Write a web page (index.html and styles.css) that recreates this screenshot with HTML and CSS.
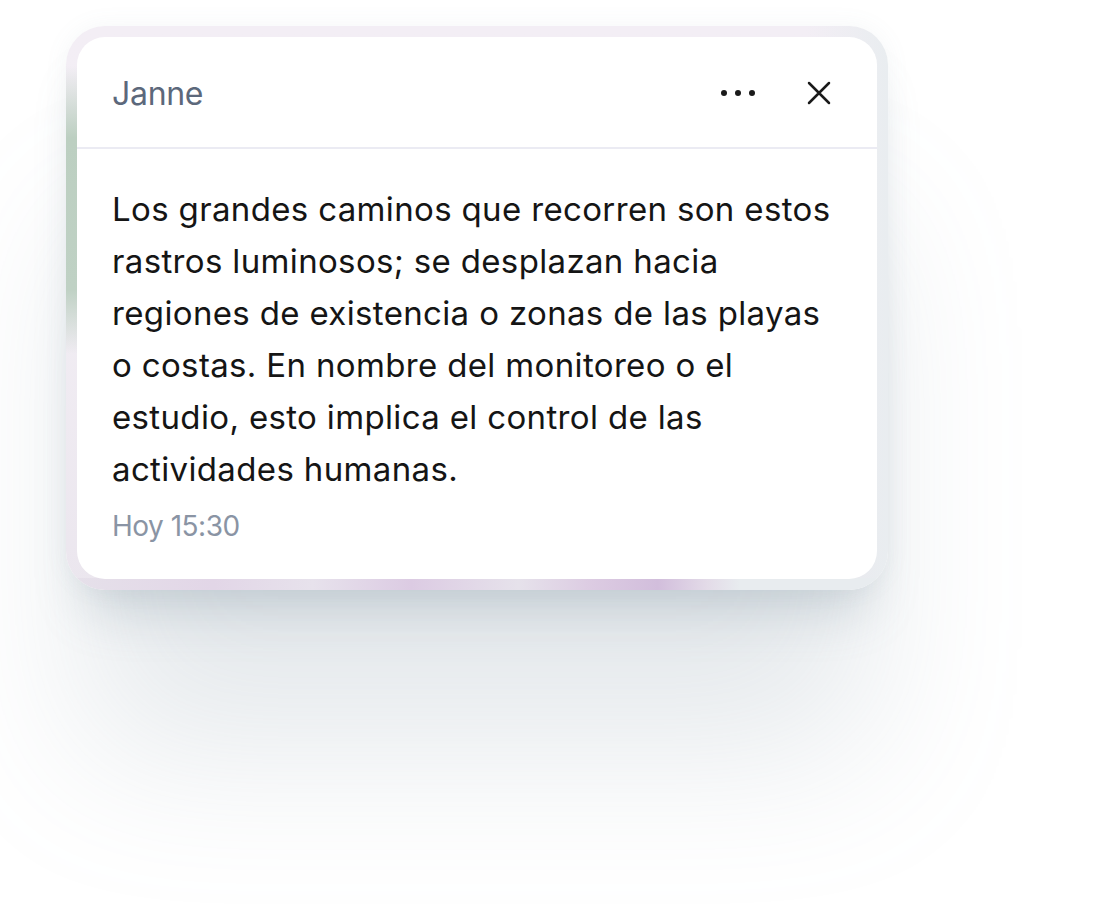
FILE: index.html
```html
<!DOCTYPE html>
<html lang="es">
<head>
<meta charset="utf-8">
<title>Janne</title>
<link rel="stylesheet" href="styles.css">
</head>
<body>
<div class="stage">
  <div class="frame">
    <div class="card">
      <div class="card-header">
        <div class="name">Janne</div>
        <div class="actions">
          <button class="icon-btn" aria-label="Más">
            <svg width="36" height="8" viewBox="0 0 36 8"><circle cx="4" cy="4" r="3" fill="#1a1a1a"/><circle cx="18" cy="4" r="3" fill="#1a1a1a"/><circle cx="32" cy="4" r="3" fill="#1a1a1a"/></svg>
          </button>
          <button class="icon-btn" aria-label="Cerrar">
            <svg width="24" height="24" viewBox="0 0 24 24"><path d="M2 2 L22 22 M22 2 L2 22" stroke="#1a1a1a" stroke-width="2.5" stroke-linecap="round"/></svg>
          </button>
        </div>
      </div>
      <div class="card-body">
        <p class="message">Los grandes caminos que recorren son estos rastros luminosos; se desplazan hacia regiones de existencia o zonas de las playas o costas. En nombre del monitoreo o el estudio, esto implica el control de las actividades humanas.</p>
        <div class="time">Hoy 15:30</div>
      </div>
    </div>
  </div>
</div>
</body>
</html>
```
FILE: styles.css
```css
html, body {
  margin: 0;
  padding: 0;
  background: #ffffff;
}
body {
  width: 1095px;
  height: 919px;
  overflow: hidden;
  font-family: Inter, "Noto Sans", sans-serif;
}
.stage {
  padding: 26px 0 0 66px;
}
.frame {
  width: 800px;
  padding: 11px;
  border-radius: 39px;
  background:
    linear-gradient(to bottom, rgba(185,205,190,0) 0, #bccfc1 20%, #bfd1c4 62%, rgba(190,205,195,0) 80%) left 0 top 40px / 11px 360px no-repeat,
    linear-gradient(to right, #e6e1ea 0, #e2d6e7 18%, #e7e2ec 30%, #dccbe3 42%, #e6e2eb 55%, #dccbe2 64%, #d2bedc 72%, #e3dbe8 78%, #e8ecef 82%, #e8ecef 100%) left 0 bottom 0 / 100% 12px no-repeat,
    linear-gradient(to right, rgba(233,237,240,0) 0, rgba(233,237,240,0) 90%, #e9edf0 100%) left 0 top 0 / 100% 100% no-repeat,
    linear-gradient(to bottom, #f3eef5 0, #f2eef4 40%, #ebe6ee 100%) left 0 top 0 / 100% 100% no-repeat;
  box-shadow:
    0 0 24px rgba(120,140,155,0.07),
    0 180px 160px -20px rgba(125,145,160,0.2),
    0 40px 50px -20px rgba(125,145,160,0.3);
}
.card {
  background: #ffffff;
  border-radius: 28px;
  overflow: hidden;
}
.card-header {
  height: 112px;
  box-sizing: border-box;
  border-bottom: 2px solid #ebebf3;
  display: flex;
  align-items: center;
  justify-content: space-between;
  padding: 2px 46px 0 35px;
}
.name {
  font-size: 32px;
  color: #5c687b;
  letter-spacing: -0.3px;
}
.actions {
  display: flex;
  align-items: center;
  gap: 51px;
}
.icon-btn {
  border: 0;
  background: none;
  padding: 0;
  margin: 0;
  display: flex;
  align-items: center;
  justify-content: center;
  cursor: pointer;
}
.card-body {
  padding: 34px 40px 33px 35px;
}
.message {
  margin: 0;
  font-size: 33px;
  line-height: 52px;
  color: #151515;
  letter-spacing: 0.35px;
}
.time {
  margin-top: 11px;
  font-size: 28px;
  line-height: 40px;
  color: #8a94a4;
  letter-spacing: -0.5px;
}
```
